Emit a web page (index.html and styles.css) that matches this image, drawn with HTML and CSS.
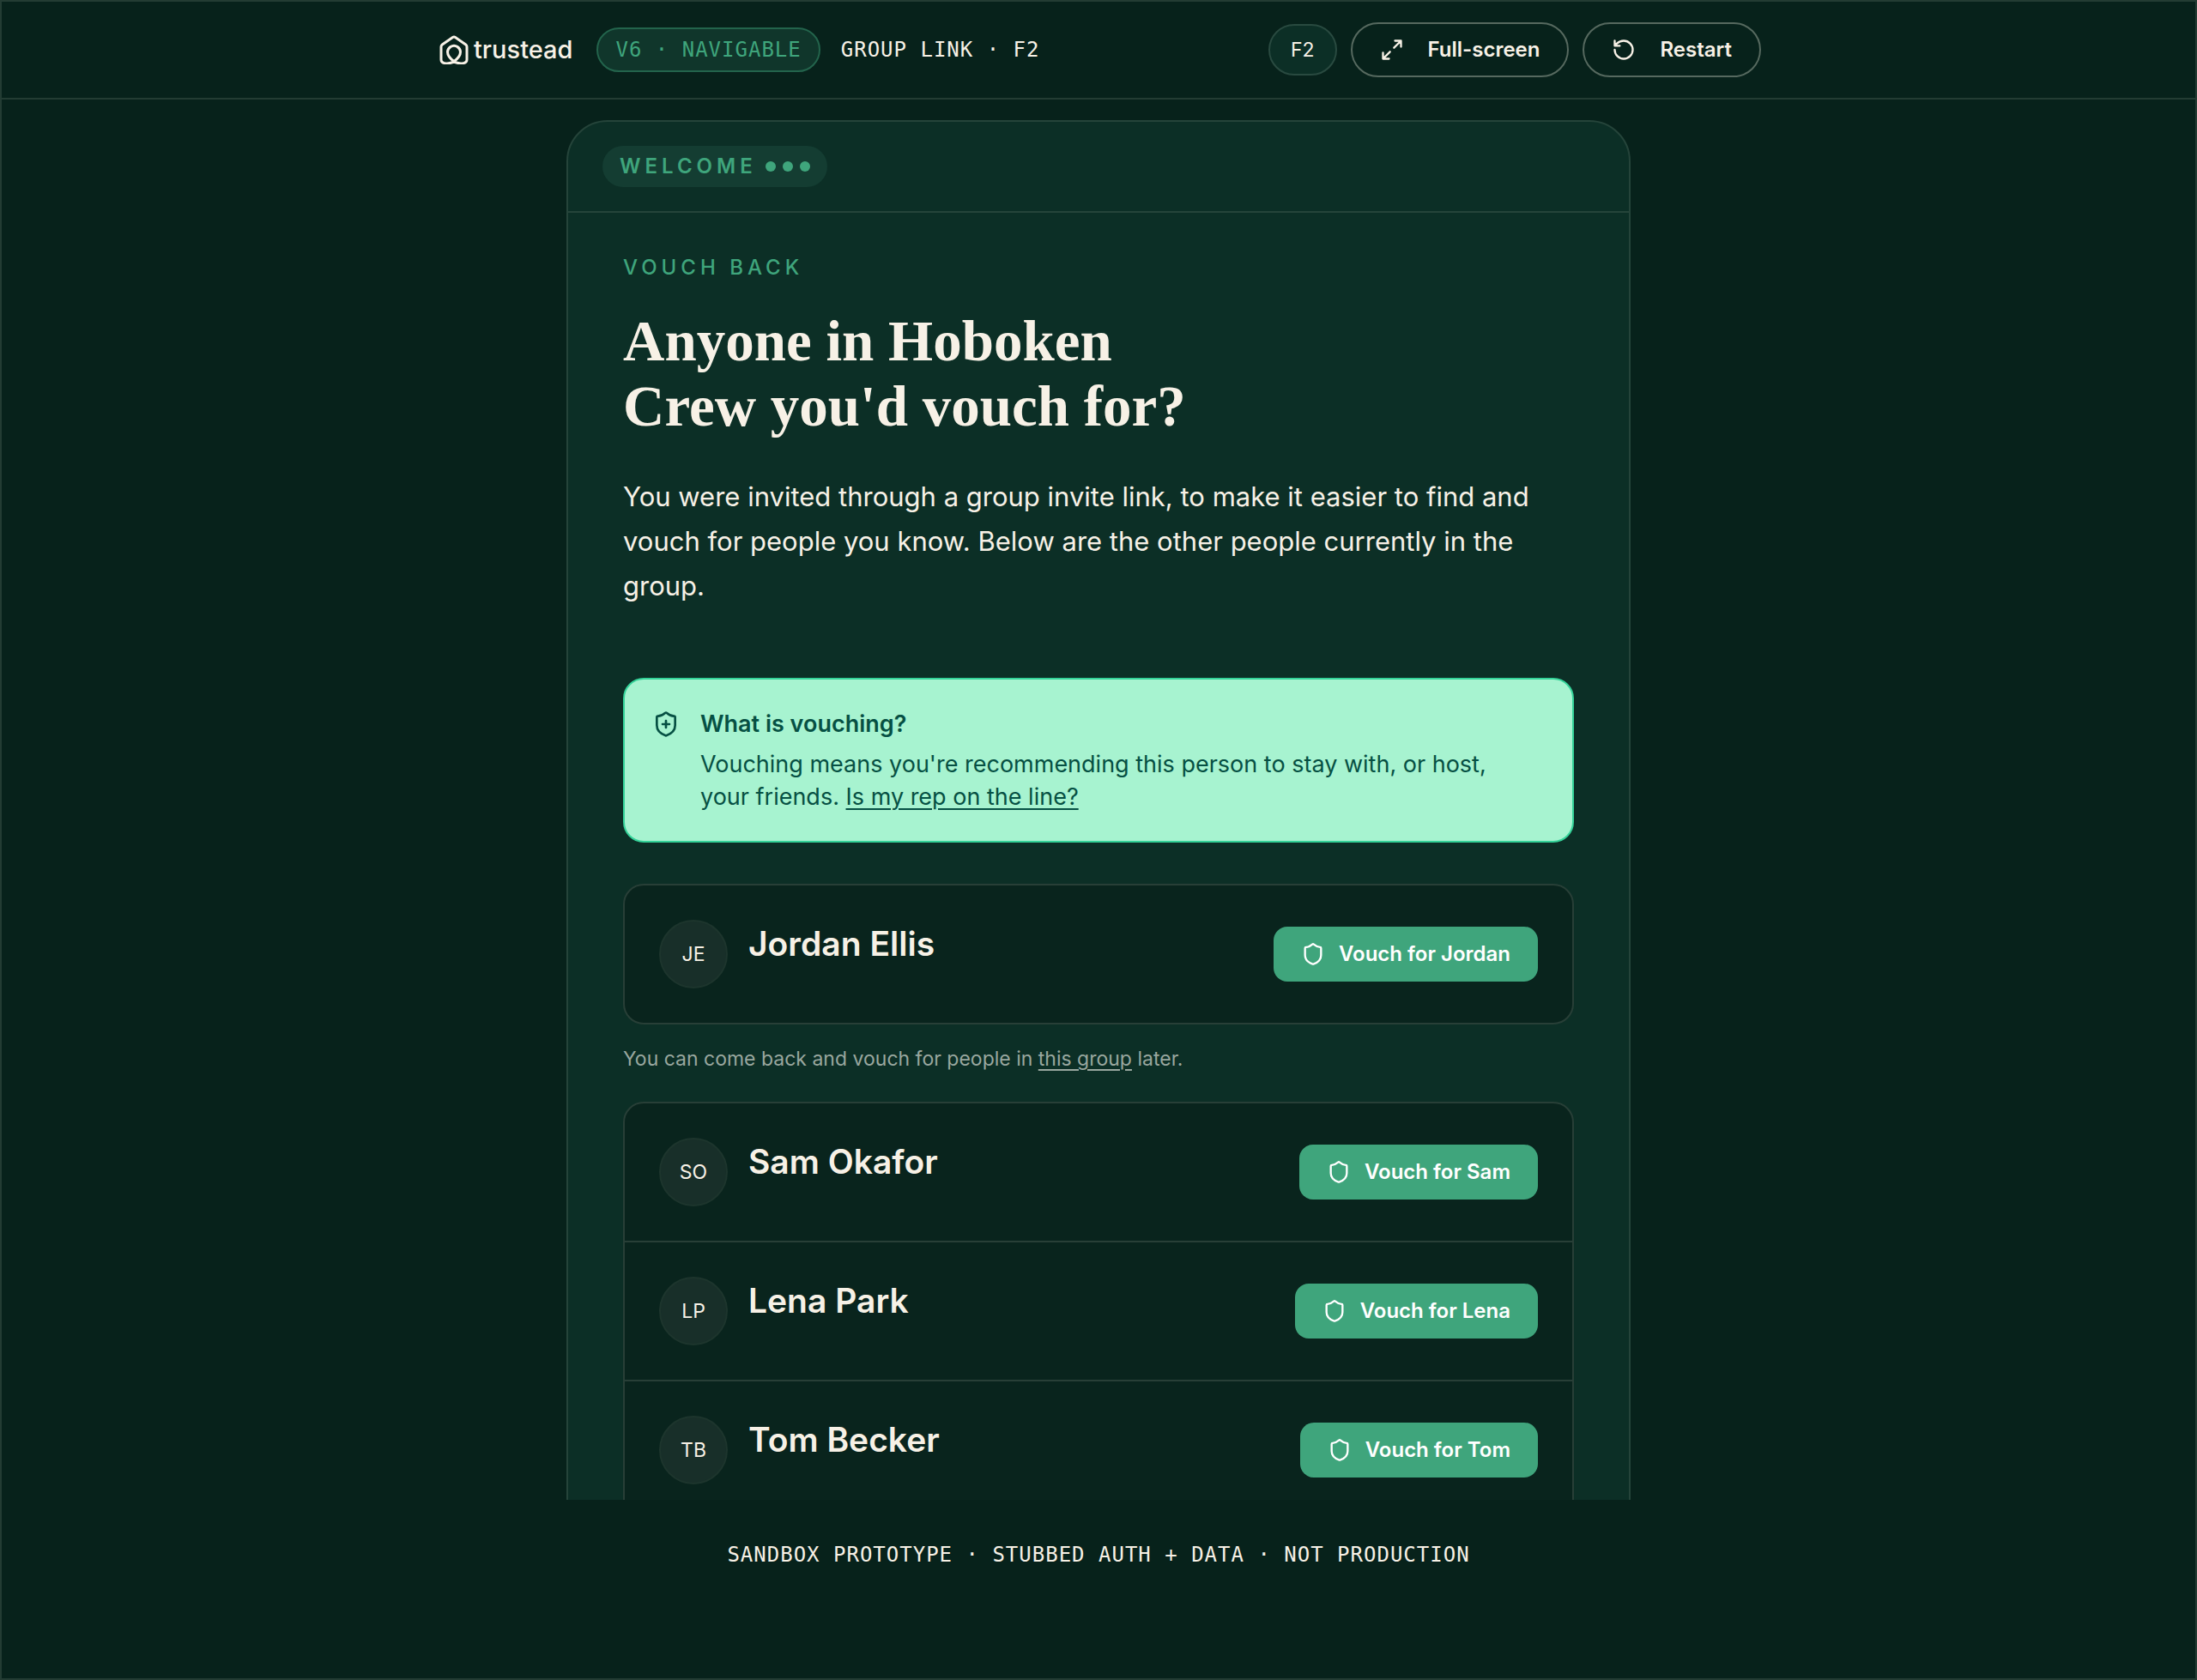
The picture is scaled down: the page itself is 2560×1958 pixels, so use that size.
FILE: index.html
```html
<!DOCTYPE html>
<html lang="en">
<head>
<meta charset="utf-8">
<meta name="viewport" content="width=device-width, initial-scale=1">
<title>trustead</title>
<link rel="stylesheet" href="styles.css">
</head>
<body>
<svg width="0" height="0" class="sprite" aria-hidden="true">
  <symbol id="shield" viewBox="0 0 24 24">
    <path d="M20 13c0 5-3.5 7.5-7.66 8.95a1 1 0 0 1-.67-.01C7.5 20.5 4 18 4 13V6a1 1 0 0 1 1-1c2 0 4.5-1.2 6.24-2.72a1.17 1.17 0 0 1 1.52 0C14.51 3.81 17 5 19 5a1 1 0 0 1 1 1z"/>
  </symbol>
</svg>
<div class="app">
  <header class="topbar">
    <div class="topbar-inner">
      <div class="brand">
        <svg class="brand-mark" viewBox="0 0 34 34" aria-hidden="true">
          <path d="M17 30.500C13 33.500 2 34.500 2 28.500V13.500Q2 12 3.300 11L15.500 2.500Q17 1.500 18.500 2.500L30.700 11Q32 12 32 13.500V28.500C32 34.500 21 33.500 17 30.500C12 27 9.500 22.500 9.500 19.500C9.500 16.500 11 15 13 13.500C16 11.500 18 11.500 21 13.500C23 15 24.500 16.500 24.500 19.500C24.500 22.500 22 27 17 30.500"/>
        </svg>
        <span class="brand-name">trustead</span>
      </div>
      <span class="version">V6 · NAVIGABLE</span>
      <span class="flow">GROUP LINK · F2</span>
      <div class="actions">
        <span class="chip">F2</span>
        <button class="ghost" type="button">
          <svg class="icon" viewBox="0 0 24 24" aria-hidden="true"><path d="M15 3h6v6M21 3l-7 7M3 21l7-7M9 21H3v-6"/></svg>
          Full-screen
        </button>
        <button class="ghost" type="button">
          <svg class="icon" viewBox="0 0 24 24" aria-hidden="true"><path d="M3 12a9 9 0 1 0 9-9 9.750 9.750 0 0 0-6.740 2.740L3 8M3 3v5h5"/></svg>
          Restart
        </button>
      </div>
    </div>
  </header>

  <main class="stage">
    <section class="card">
      <div class="card-head">
        <div class="step">
          <span>WELCOME</span>
          <span class="dots"><i></i><i></i><i></i></span>
        </div>
      </div>
      <div class="card-body">
        <p class="eyebrow">VOUCH BACK</p>
        <h1 class="title">Anyone in Hoboken<br>Crew you'd vouch for?</h1>
        <p class="lead">You were invited through a group invite link, to make it easier to find and vouch for people you know. Below are the other people currently in the group.</p>

        <aside class="note">
          <svg class="icon note-icon" viewBox="0 0 24 24" aria-hidden="true"><use href="#shield"/><path d="M9 12h6M12 9v6"/></svg>
          <div class="note-text">
            <h2 class="note-title">What is vouching?</h2>
            <p>Vouching means you're recommending this person to stay with, or host, your friends. <a href="#rep">Is my rep on the line?</a></p>
          </div>
        </aside>

        <ul class="people">
          <li class="person">
            <span class="avatar">JE</span>
            <h3 class="name">Jordan Ellis</h3>
            <button class="vouch" type="button"><svg class="icon" aria-hidden="true"><use href="#shield"/></svg>Vouch for Jordan</button>
          </li>
        </ul>
        <p class="hint">You can come back and vouch for people in <a href="#group">this group</a> later.</p>
        <ul class="people">
          <li class="person">
            <span class="avatar">SO</span>
            <h3 class="name">Sam Okafor</h3>
            <button class="vouch" type="button"><svg class="icon" aria-hidden="true"><use href="#shield"/></svg>Vouch for Sam</button>
          </li>
          <li class="person">
            <span class="avatar">LP</span>
            <h3 class="name">Lena Park</h3>
            <button class="vouch" type="button"><svg class="icon" aria-hidden="true"><use href="#shield"/></svg>Vouch for Lena</button>
          </li>
          <li class="person">
            <span class="avatar">TB</span>
            <h3 class="name">Tom Becker</h3>
            <button class="vouch" type="button"><svg class="icon" aria-hidden="true"><use href="#shield"/></svg>Vouch for Tom</button>
          </li>
        </ul>
      </div>
    </section>
  </main>

  <footer class="footer">SANDBOX PROTOTYPE · STUBBED AUTH + DATA · NOT PRODUCTION</footer>
</div>
</body>
</html>
```
FILE: styles.css
```css
:root {
  --bg: #07221b;
  --panel: #0c2f26;
  --inset: #09241d;
  --line: #233c33;
  --cream: #f7f1e6;
  --green: #3fa57c;
  --sans: Inter, "Open Sans", sans-serif;
  --mono: "DejaVu Sans Mono", "Liberation Mono", monospace;
}

* {
  box-sizing: border-box;
}

body,
h1,
h2,
h3,
p,
ul {
  margin: 0;
  padding: 0;
}

body {
  background: var(--bg);
  color: var(--cream);
  font-family: var(--sans);
  font-size: 24px;
  line-height: 32px;
}

a {
  color: inherit;
  text-decoration-thickness: 2px;
  text-underline-offset: 4px;
}

button {
  font: inherit;
  cursor: pointer;
}

.sprite {
  position: absolute;
}

.icon {
  width: 28px;
  height: 28px;
  flex: none;
  fill: none;
  stroke: currentColor;
  stroke-width: 2;
  stroke-linecap: round;
  stroke-linejoin: round;
}

.app {
  display: flex;
  flex-direction: column;
  height: 100vh;
  border: 2px solid var(--line);
}

/* Top bar */
.topbar {
  flex: none;
  padding: 24px;
  border-bottom: 2px solid var(--line);
}

.topbar-inner {
  display: flex;
  align-items: center;
  max-width: 1544px;
  margin: 0 auto;
  padding-left: 4px;
}

.brand {
  display: flex;
  align-items: center;
  gap: 6px;
  margin-right: 28px;
}

.brand-mark {
  width: 34px;
  height: 34px;
  fill: none;
  stroke: var(--cream);
  stroke-width: 3;
  stroke-linejoin: round;
}

.brand-name {
  font-size: 29px;
  font-weight: 500;
}

.version,
.flow,
.footer {
  font-family: var(--mono);
  letter-spacing: 1px;
}

.version {
  padding: 8px 20px;
  margin-right: 24px;
  border: 2px solid #23644c;
  border-radius: 26px;
  background: #10362b;
  color: var(--green);
}

.actions {
  display: flex;
  align-items: center;
  gap: 16px;
  margin-left: auto;
}

.chip {
  padding: 12px 24px;
  border: 2px solid #294a40;
  border-radius: 30px;
  background: var(--panel);
  font-size: 23px;
}

.ghost {
  display: flex;
  align-items: center;
  gap: 28px;
  padding: 14px 32px;
  border: 2px solid #56695f;
  border-radius: 32px;
  background: none;
  color: var(--cream);
  font-weight: 600;
}

/* Stage and card */
.stage {
  flex: 1;
  min-height: 0;
  overflow: hidden;
  padding: 24px 24px 0;
}

.card {
  max-width: 1240px;
  margin: 0 auto;
  border: 2px solid #25443a;
  border-radius: 48px;
  background: var(--panel);
}

.card-head {
  display: flex;
  padding: 28px 40px;
  border-bottom: 2px solid #25443a;
}

.step {
  display: flex;
  align-items: center;
  gap: 10px;
  padding: 8px 20px;
  border-radius: 24px;
  background: #143d32;
  color: var(--green);
  font-weight: 600;
  letter-spacing: 5px;
}

.dots {
  display: flex;
  gap: 8px;
}

.dots i {
  width: 12px;
  height: 12px;
  border-radius: 50%;
  background: var(--green);
}

.card-body {
  padding: 48px 64px 64px;
}

.eyebrow {
  color: var(--green);
  font-weight: 500;
  letter-spacing: 5px;
}

.title {
  margin-top: 31px;
  font-family: "Liberation Serif", serif;
  font-size: 67px;
  font-weight: 700;
  line-height: 76px;
}

.lead {
  margin-top: 42px;
  font-size: 31px;
  line-height: 52px;
}

/* Explainer */
.note {
  display: flex;
  gap: 24px;
  margin-top: 81px;
  padding: 32px 48px 32px 32px;
  border: 2px solid #34d399;
  border-radius: 24px;
  background: #a7f3d0;
  color: #065043;
  font-size: 27px;
  line-height: 38px;
}

.note-icon {
  width: 32px;
  height: 32px;
  margin-top: 4px;
}

.note-title {
  margin-bottom: 8px;
  font-size: 27px;
  font-weight: 600;
  line-height: 40px;
}

/* People */
.people {
  list-style: none;
  border: 2px solid #283f37;
  border-radius: 24px;
  background: var(--inset);
}

.note + .people {
  margin-top: 48px;
}

.person {
  display: flex;
  align-items: center;
  gap: 24px;
  padding: 40px;
}

.person + .person {
  border-top: 2px solid #283f37;
}

.avatar {
  display: flex;
  align-items: center;
  justify-content: center;
  width: 80px;
  height: 80px;
  border: 2px solid #1d352d;
  border-radius: 50%;
  background: #182f29;
  font-size: 23px;
}

.name {
  flex: 1;
  align-self: flex-start;
  font-size: 39px;
  font-weight: 600;
  line-height: 56px;
}

.vouch {
  display: flex;
  align-items: center;
  gap: 16px;
  padding: 16px 32px;
  border: 0;
  border-radius: 16px;
  background: var(--green);
  color: #fff;
  font-weight: 600;
}

.hint {
  margin: 24px 0 34px;
  color: #99a79f;
  font-size: 23px;
}

.footer {
  flex: none;
  padding: 48px 24px 128px;
  text-align: center;
}
```
